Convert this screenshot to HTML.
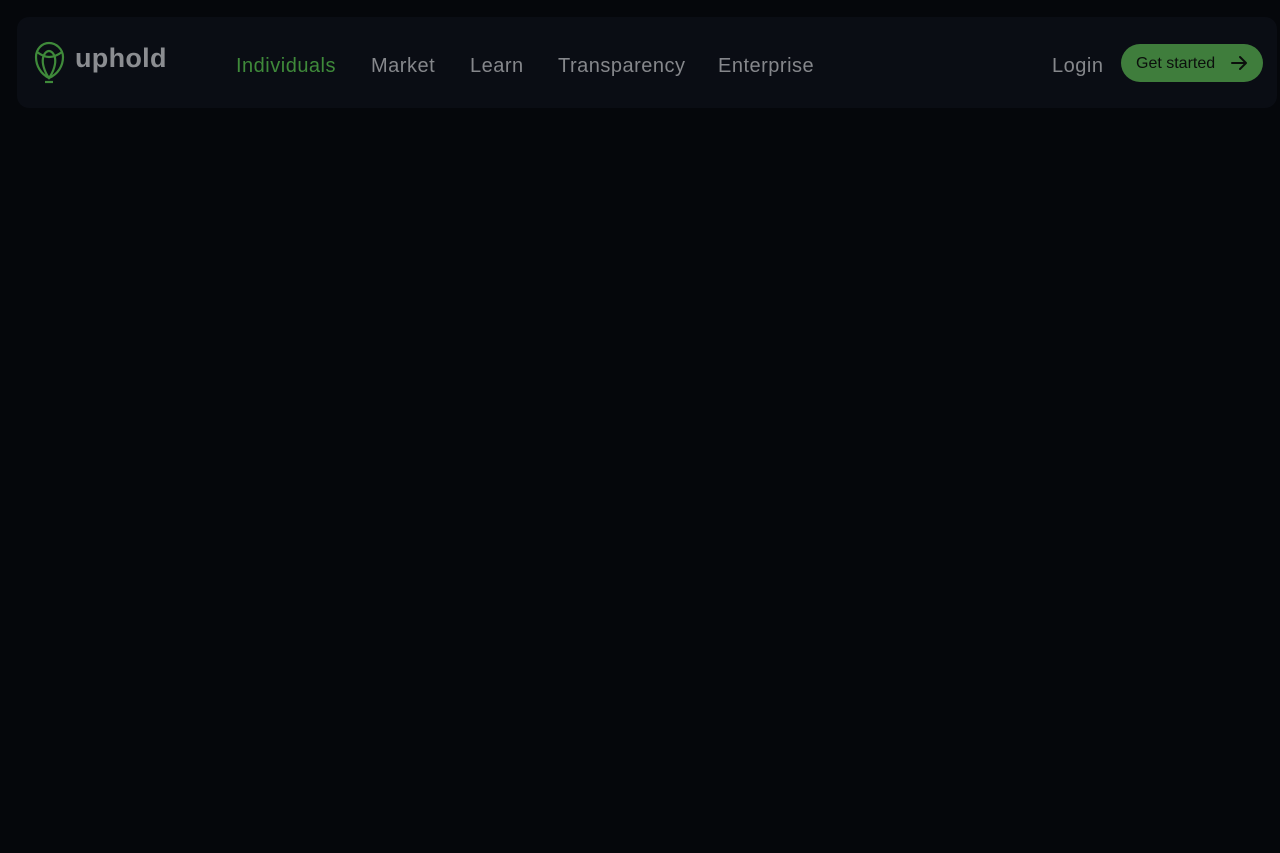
<!DOCTYPE html>
<html><head><style>
body{margin:0;background:#05070b;width:1280px;height:853px;overflow:hidden;font-family:"Liberation Sans",sans-serif}
.hdr{position:absolute;left:17px;top:17px;width:1260px;height:91px;background:#0a0d14;border-radius:12px}
.t{position:absolute;font-size:20px;color:#85878b;top:53px;line-height:26px;letter-spacing:0.5px}
.btn{position:absolute;left:1121px;top:44px;width:142px;height:38px;background:#3f7d3c;border-radius:19px;color:#0b0f0c;font-size:16px;line-height:38px}
</style></head><body>
<div class="hdr"></div>
<svg style="position:absolute;left:34px;top:41px" width="32" height="44" viewBox="0 0 32 44" fill="none" stroke="#3f8a3a" stroke-width="2.2">
<path d="M15 37C7 33 2 25 2 16 2 8 8 2 15 2s14 6 14 14c0 9-5 17-14 21z"/>
<path d="M15 37C10 30 8 22 9 17c1-5 4-7 6-7s5 2 6 7c1 5-1 13-6 20z"/>
<path d="M3 11c4 3 8 5 12 5s9-2 13-5"/>
<path d="M11 41h8"/>
</svg>
<div class="t" style="left:75px;top:45px;font-size:27px;color:#8b8d91;font-weight:bold;letter-spacing:0.3px">uphold</div>
<div class="t" style="left:236px;color:#3f8a3a">Individuals</div>
<div class="t" style="left:371px">Market</div>
<div class="t" style="left:470px">Learn</div>
<div class="t" style="left:558px">Transparency</div>
<div class="t" style="left:718px">Enterprise</div>
<div class="t" style="left:1052px">Login</div>
<div class="btn"><span style="position:absolute;left:15px;top:1px">Get started</span>
<svg style="position:absolute;left:1109px;left:109px;top:11px" width="18" height="16" viewBox="0 0 18 16" fill="none" stroke="#0b0f0c" stroke-width="2" stroke-linecap="round" stroke-linejoin="round"><path d="M2 8h14M10 2l6 6-6 6"/></svg></div>
</body></html>
